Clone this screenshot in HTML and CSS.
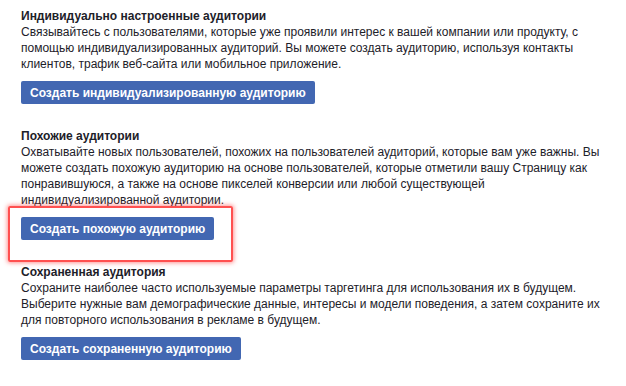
FILE: index.html
```html
<!DOCTYPE html>
<html lang="ru">
<head>
    <meta charset="UTF-8">
    <meta name="viewport" content="width=device-width, initial-scale=1.0">
    <title>Аудитории</title>
    <link rel="stylesheet" href="styles.css">
</head>
<body>
    <div class="page">
        <div class="section">
            <div class="title">Индивидуально настроенные аудитории</div>
            <div class="desc">Связывайтесь с пользователями, которые уже проявили интерес к вашей компании или продукту, с помощью индивидуализированных аудиторий. Вы можете создать аудиторию, используя контакты клиентов, трафик веб-сайта или мобильное приложение.</div>
            <div class="action">
                <button class="btn">Создать индивидуализированную аудиторию</button>
            </div>
        </div>

        <div class="section">
            <div class="title">Похожие аудитории</div>
            <div class="desc">Охватывайте новых пользователей, похожих на пользователей аудиторий, которые вам уже важны. Вы можете создать похожую аудиторию на основе пользователей, которые отметили вашу Страницу как понравившуюся, а также на основе пикселей конверсии или любой существующей индивидуализированной аудитории.</div>
            <div class="action">
                <button class="btn">Создать похожую аудиторию</button>
                <div class="highlight"></div>
            </div>
        </div>

        <div class="section">
            <div class="title">Сохраненная аудитория</div>
            <div class="desc">Сохраните наиболее часто используемые параметры таргетинга для использования их в будущем. Выберите нужные вам демографические данные, интересы и модели поведения, а затем сохраните их для повторного использования в рекламе в будущем.</div>
            <div class="action">
                <button class="btn">Создать сохраненную аудиторию</button>
            </div>
        </div>
    </div>
</body>
</html>
```

FILE: styles.css
```css
body {
    margin: 0;
    background-color: #fff;
    font-family: "Liberation Sans", Arial, sans-serif;
    font-size: 12px;
    color: #1d2129;
}
.page {
    padding: 8px 21px 0 21px;
    max-width: 588px;
}
.section {
    margin-bottom: 24px;
}
.title {
    font-weight: bold;
    line-height: 16px;
}
.desc {
    line-height: 16px;
}
.action {
    position: relative;
    display: inline-block;
    margin-top: 9px;
}
.btn {
    display: block;
    height: 23px;
    padding: 0 9px;
    border: 0;
    border-radius: 2px;
    background-color: #4267b2;
    color: #fff;
    font-family: "Liberation Sans", Arial, sans-serif;
    font-size: 12px;
    font-weight: bold;
    cursor: pointer;
}
.highlight {
    position: absolute;
    top: -11px;
    left: -13px;
    right: -19px;
    bottom: -22px;
    border: 2px solid #ff5050;
    border-radius: 2px;
    box-shadow: 0 0 4px 1px rgba(255, 60, 60, 0.55);
}
```
